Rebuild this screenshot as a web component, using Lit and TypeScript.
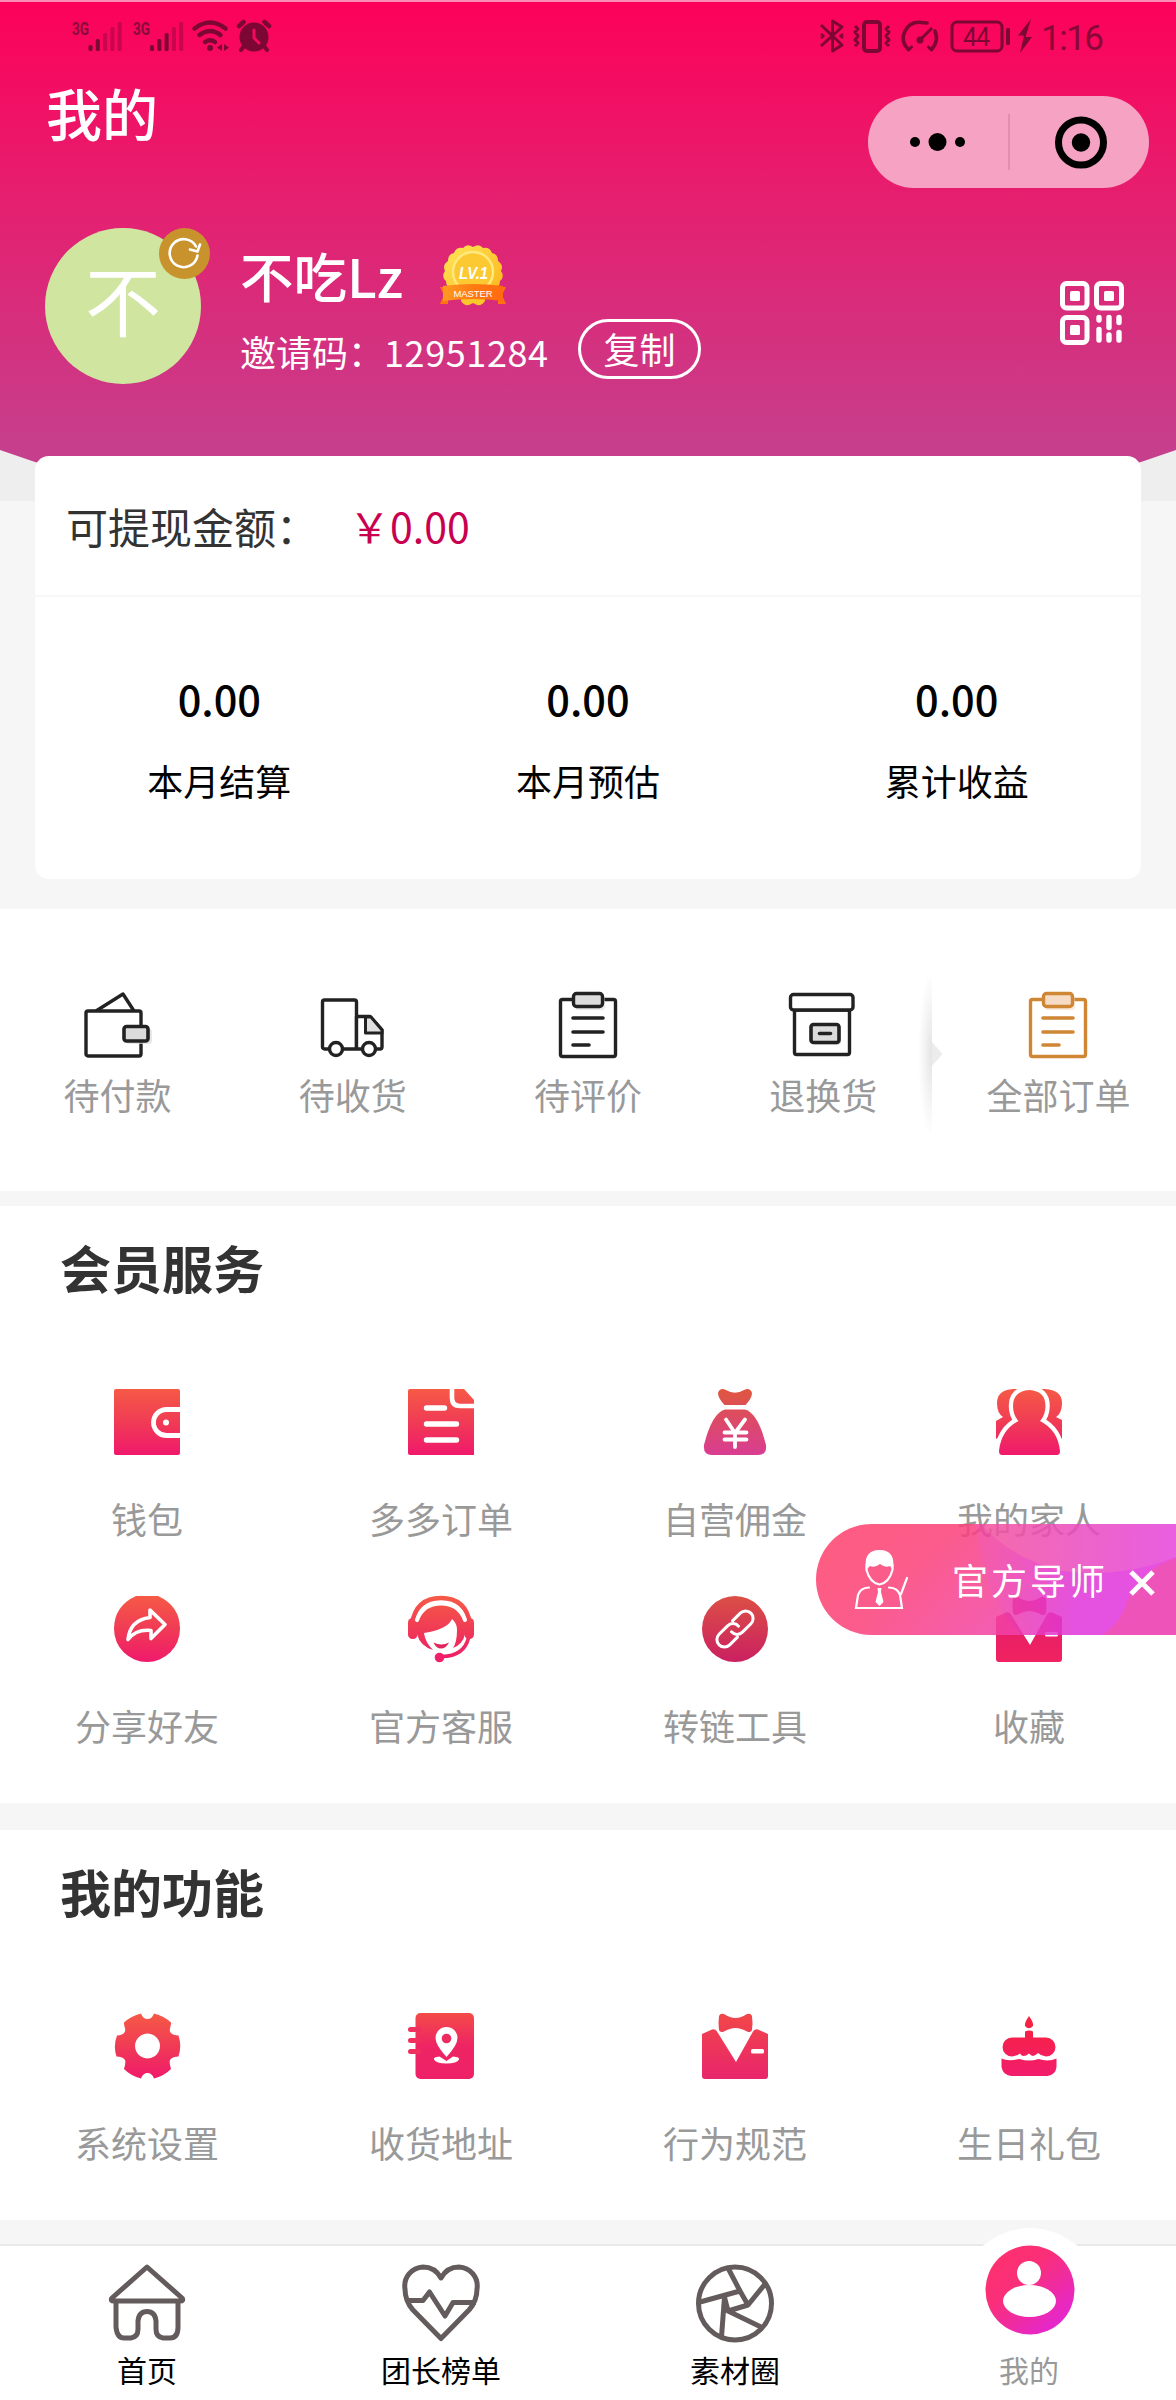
import { LitElement, html, css, svg, TemplateResult, SVGTemplateResult } from "lit";
import { customElement } from "lit/decorators.js";

interface Entry {
  label: string;
  art: SVGTemplateResult;
}

/* Line icons of the order row, drawn on a 72 x 72 grid. */
const clipboard = (line: string, pad: string) => svg`
  <rect x="8.5" y="11.5" width="55" height="57" rx="2" fill="#fff" stroke=${line} stroke-width="3.4"/>
  <rect x="23" y="9" width="30" height="13" rx="3" fill=${pad} opacity=".6"/>
  <rect x="21.5" y="5.5" width="29" height="13" rx="3" fill=${pad} stroke=${line} stroke-width="3.4"/>
  <path d="M21 30h30M21 44h30M21 57h16" stroke=${line} stroke-width="3.6" stroke-linecap="round"/>`;

const orders: Entry[] = [
  {
    label: "待付款",
    art: svg`
      <path d="M14 23L41 6l11 17" fill="#fff" stroke="#222" stroke-width="3.4" stroke-linejoin="round"/>
      <rect x="4" y="23" width="55" height="45" rx="2" fill="#fff" stroke="#222" stroke-width="3.4"/>
      <rect x="44" y="41" width="26" height="15" rx="3" fill="#ddd" opacity=".7"/>
      <rect x="42" y="38.5" width="24" height="14.5" rx="2.5" fill="#dcdcdc" stroke="#222" stroke-width="3.6"/>`,
  },
  {
    label: "待收货",
    art: svg`
      <rect x="5.5" y="12" width="34" height="49" rx="2" fill="#fff" stroke="#222" stroke-width="3.4"/>
      <path d="M39.5 28.5H53L65 42v17q0 2-2 2H39.5z" fill="#fff" stroke="#222" stroke-width="3.4" stroke-linejoin="round"/>
      <path d="M48.5 29H54L65 42v3H48.5z" fill="#e0e0e0" stroke="#222" stroke-width="3" stroke-linejoin="round"/>
      <circle cx="19" cy="61" r="6.5" fill="#fff" stroke="#222" stroke-width="3.4"/>
      <circle cx="52" cy="61" r="6.5" fill="#fff" stroke="#222" stroke-width="3.4"/>`,
  },
  { label: "待评价", art: clipboard("#222", "#dcdcdc") },
  {
    label: "退换货",
    art: svg`
      <rect x="7.5" y="22" width="55" height="44.5" rx="2" fill="#fff" stroke="#222" stroke-width="3.4"/>
      <rect x="3.5" y="6.5" width="62.5" height="15.5" rx="3" fill="#fff" stroke="#222" stroke-width="3.4"/>
      <rect x="26" y="39" width="28" height="18" rx="3" fill="#ddd" opacity=".7"/>
      <rect x="24" y="36.5" width="28" height="18" rx="2.5" fill="#dcdcdc" stroke="#222" stroke-width="3.6"/>
      <path d="M32.5 45.5h11" stroke="#222" stroke-width="3.6" stroke-linecap="round"/>`,
  },
  { label: "全部订单", art: clipboard("#cf8635", "#f6dcc4") },
];

/* Filled service icons, drawn on a 66 x 66 grid. */
const suit = (fill: string) => svg`
  <path fill=${fill} d="M0 21L10 16.5q3-1 5 2L34 49 51 18.5q2-3 5-2L66 21V63q0 3-3 3H3q-3 0-3-3z"/>
  <path fill=${fill} d="M17 3q1-3 5-2 6 4 11.5 4T45 1q4-1 5 2 1 7 0 14-1 3-5 1.5Q39 15 33.5 15T22 18.5Q18 20 17 17q-1-7 0-14z"/>
  <rect x="49" y="36" width="13" height="4.5" rx="1.5" fill="#fff"/>`;

const services: Entry[] = [
  {
    label: "钱包",
    art: svg`
      <rect width="66" height="66" rx="2" fill="url(#warm)"/>
      <path d="M66 20.5H52.5a13 13 0 0 0 0 26H66" fill="none" stroke="#fff" stroke-width="4.8"/>
      <circle cx="52" cy="33.5" r="3" fill="#fff"/>`,
  },
  {
    label: "多多订单",
    art: svg`
      <path d="M2 0H56L66 11V66H2q-2 0-2-2V2q0-2 2-2z" fill="url(#warm)"/>
      <path d="M44 0v9q0 8 8 8H66" fill="none" stroke="#fff" stroke-width="4.6"/>
      <path d="M18.5 19h18M18.5 35h30M18.5 51h30" stroke="#fff" stroke-width="5.4" stroke-linecap="round"/>`,
  },
  {
    label: "自营佣金",
    art: svg`
      <path d="M16 4q2-6 8-3 9 5.5 18 0 6-3 8 3 0 5-6.5 12H22.5Q16 9 16 4z" fill="url(#bag)"/>
      <path d="M23 20.5H43Q56 24 64 56q1 10-8 10H10Q1 66 2 56 10 24 23 20.5z" fill="url(#bag)"/>
      <path d="M24 30.5L33 44 43 30.5M33 44V58M22.5 43.5H44.5M22.5 50.5H44.5" fill="none" stroke="#fff" stroke-width="3.8" stroke-linecap="round"/>`,
  },
  {
    label: "我的家人",
    art: svg`
      <path d="M17 0Q1 1 1 14q0 10 6 14l-7 4V50L24 32V0zM49 0Q66 1 66 14q0 10-6 14l6 3V50L44 32V0z" fill="url(#warm)"/>
      <path d="M33.5 1Q49.500 2 49.500 17q0 9-5.500 15 18 9 20 30 0 4-3 4H6q-3 0-3-4Q5 41 22.500 32 17 26 17 17 17 2 33.500 1z" fill="#fff" stroke="#fff" stroke-width="8.500"/>
      <path d="M33.5 1Q49.500 2 49.500 17q0 9-5.500 15 18 9 20 30 0 4-3 4H6q-3 0-3-4Q5 41 22.500 32 17 26 17 17 17 2 33.500 1z" fill="url(#warm)"/>`,
  },
  {
    label: "分享好友",
    art: svg`
      <path d="M22 0H44Q66 10 66 33A33 33 0 0 1 0 33Q0 10 22 0z" fill="url(#warm)"/>
      <path d="M36 14L51 28.5 37 42.5V34.5Q22 33 14 43.5 16 24 36 21.5z" fill="none" stroke="#fff" stroke-width="3.6" stroke-linejoin="round"/>`,
  },
  {
    label: "官方客服",
    art: svg`
      <path d="M4 28Q8 2 33 2T62 28" fill="none" stroke="url(#warm)" stroke-width="4.5"/>
      <path d="M9 26Q14 8 33 8.5T57 26V38q-2 10-12 14 4-6 4-18 0-7-5-11-4 10-28 14 1 9 9 17Q12 50 9 38z" fill="url(#warm)"/>
      <rect x="0" y="22" width="9.5" height="21" rx="4.5" fill="url(#warm)"/>
      <rect x="56.5" y="22" width="9.5" height="21" rx="4.5" fill="url(#warm)"/>
      <path d="M60.500 42Q56 60 34 60.5" fill="none" stroke="url(#warm)" stroke-width="3.6"/>
      <path d="M9 24Q15 7.5 33 7.5T57 24" fill="none" stroke="#fff" stroke-width="4" stroke-linecap="round"/>
      <path d="M25.5 46.5q8 4 15.5 0-3 6-8 6t-7.5-6z" fill="#e0265c"/>
      <circle cx="31.5" cy="61.5" r="4.8" fill="#f0206a"/>`,
  },
  {
    label: "转链工具",
    art: svg`
      <circle cx="33" cy="33" r="33" fill="url(#deep)"/>
      <g transform="rotate(-45 33 33)" fill="none" stroke="#fff" stroke-width="3" stroke-linecap="round">
        <path d="M29 40.5H18a7.500 7.500 0 0 1 0-15H30a7.500 7.500 0 0 1 7.500 8"/>
        <path d="M37 25.5H48a7.500 7.500 0 0 1 0 15H36a7.500 7.500 0 0 1-7.500-8"/>
      </g>`,
  },
  { label: "收藏", art: suit("url(#suitRed)") },
];

const features: Entry[] = [
  {
    label: "系统设置",
    art: svg`
      <path fill="url(#warm)" fill-rule="evenodd" d="M27 .500Q17 3 10 9.500C9.500 13 13 17 10 20Q8 22 3 22.500Q-1 33 2.500 43.500C6 43.500 9 44 11 47Q12 50 10 56Q17 63 27 65.500Q29 60 33.500 60Q38 60 40 65.500Q50 63 57 56Q55 50 56 47C58 44 61 43.500 64.500 43.500Q68 33 64.500 22.500Q59 22 57 20C54 17 57.500 13 57 9.500Q50 3 40 .500Q38 6 33.500 6Q29 6 27 .500zM33.500 20.500a12.500 12.500 0 1 0 .01 0z"/>`,
  },
  {
    label: "收货地址",
    art: svg`
      <rect x="7.5" width="58.500" height="66" rx="5" fill="url(#book)"/>
      <path d="M2.5 16.5h8M2.5 27.5h8M2.5 38.5h8" stroke="#f0305f" stroke-width="5" stroke-linecap="round"/>
      <path d="M38.5 44Q27.5 32 27.5 25a11 11 0 0 1 22 0Q49.5 32 38.5 44z" fill="#fff"/>
      <circle cx="38.5" cy="25.5" r="4.8" fill="#ee2a63"/>
      <path d="M31.5 43.5Q25 44 26 46.5 28 50.5 38.5 50.5T51 46.5Q52 44 45 43.5L38.5 48z" fill="#fff"/>`,
  },
  { label: "行为规范", art: suit("url(#suitSoft)") },
  {
    label: "生日礼包",
    art: svg`
      <path d="M33 3q5 7 4 10-4 4.5-8 0-1-3 4-10z" fill="url(#cake)"/>
      <path d="M29 18.5q4-2 8 0V24.5H50a9.500 9.500 0 0 1 0 19Q45 43 42 40 37 45.5 33 40.5 27 45.5 24 40.5 21 43 16 43.5a9.500 9.500 0 0 1 0-19H29z" fill="url(#cake)"/>
      <path d="M5.5 45.5q6 3 18 .5 9 3 19 0 10 3 18-.5V54q-1 8-9 9H15q-8-1-9.5-9z" fill="url(#cake)"/>`,
  },
];

/* Tab bar icons on an 80 x 80 grid. */
const tabs: Entry[] = [
  {
    label: "首页",
    art: svg`
      <g fill="none" stroke="#645c5c" stroke-width="5" stroke-linejoin="round" stroke-linecap="round">
        <path d="M40 4L75 35q2 3-2 3H7q-4 0-2-3z"/>
        <path d="M9 40V64q1 11 8 11h7q7-1 7-9V58q1-9.500 9-9.500T49 58v8q0 8 7 9h7q8 0 8-11V40"/>
      </g>`,
  },
  {
    label: "团长榜单",
    art: svg`
      <g fill="none" stroke="#645c5c" stroke-width="5" stroke-linejoin="round">
        <path d="M40 75.5L12 47Q4 38 4 26A19 19 0 0 1 22 4q12 0 18 11Q46 4 58 4A19 19 0 0 1 76 26q0 12-8 21z"/>
        <path d="M5 37.5H22L28.500 29 44 53 52 39.500H75"/>
      </g>`,
  },
  {
    label: "素材圈",
    art: svg`
      <g fill="none" stroke="#645c5c" stroke-width="5" stroke-linejoin="round">
        <circle cx="40" cy="40.500" r="36.500"/>
        <path d="M33 5L45 28 5 39M70 21L53 42 45 28M66 64L33 48 53 42M26.500 74L29.500 34 33 48"/>
      </g>`,
  },
  {
    label: "我的",
    art: svg``,
  },
];

@customElement("app-root")
export class AppRoot extends LitElement {
  static styles = css`
    :host {
      display: block;
      width: 1176px;
      height: 2400px;
      overflow: hidden;
      background: #f6f6f6;
      color: #000;
      font-family: "Noto Sans CJK SC", sans-serif;
      font-size: 36px;
      line-height: 1;
    }
    * { box-sizing: border-box; }
    svg { display: block; flex: none; overflow: visible; }
    .page { position: relative; display: flex; flex-direction: column; height: 2400px; }
    .defs { position: absolute; width: 0; height: 0; }

    .top { display: grid; height: 909px; flex: none; }
    .backdrop, .front { grid-area: 1 / 1; }
    .front { display: flex; flex-direction: column; }
    .status {
      display: flex; justify-content: space-between; align-items: flex-start;
      height: 70px; padding: 17px 72px 0 72px; flex: none;
    }
    .nav {
      display: flex; justify-content: space-between; align-items: flex-start;
      height: 158px; padding: 12px 27px 0 46px; flex: none; color: #fff;
    }
    .nav-title { font-size: 56px; line-height: 60px; font-weight: 500; }
    .capsule { margin-top: 14px; }
    .profile { display: flex; height: 228px; padding: 0 52px 0 45px; color: #fff; flex: none; }
    .avatar {
      position: relative; width: 156px; height: 156px; border-radius: 50%;
      background: #cfe5a0; font-size: 76px; text-align: center; line-height: 141px; flex: none;
    }
    .refresh { position: absolute; right: -9px; top: 0; }
    .who { margin-left: 39px; flex: 1; }
    .name-row { display: flex; align-items: flex-start; height: 91px; padding-top: 17px; gap: 36px; }
    .name { font-size: 53.5px; font-weight: 500; line-height: 60px; }
    .code-row { display: flex; align-items: center; height: 60px; }
    .code { width: 338px; padding-top: 4px; white-space: nowrap; }
    .digits { letter-spacing: 0.6px; }
    .copy {
      width: 123px; height: 60px; border: 3px solid #fff; border-radius: 30px;
      text-align: center; line-height: 53px;
    }
    .qr { margin-top: 53px; }

    .card {
      width: 1106px; height: 423px; margin-left: 35px; background: #fff; border-radius: 14px; flex: none;
    }
    .balance {
      display: flex; align-items: center; height: 141px; padding: 0 0 0 31px;
      border-bottom: 2px solid #f8f8f8; font-size: 42px; color: #333;
    }
    .balance-label { width: 283px; white-space: nowrap; }
    .amount { color: #c8004f; font-size: 41px; }
    .stats { display: grid; grid-template-columns: repeat(3, 1fr); padding-top: 78px; text-align: center; }
    .stat-value { font-size: 41.5px; line-height: 46px; font-weight: 500; }
    .stat-label { line-height: 40px; margin-top: 39px; }

    .orders {
      position: relative; display: grid; grid-template-columns: repeat(5, 1fr);
      height: 282px; padding-top: 79px; background: #fff; flex: none;
    }
    .cell { display: flex; flex-direction: column; align-items: center; color: #999; white-space: nowrap; }
    .orders .cell { gap: 14px; }
    .orders .cell span { line-height: 40px; }
    .split { position: absolute; left: 916px; top: 67px; }

    .section { background: #fff; margin-top: 15px; height: 597px; padding-top: 33px; flex: none; }
    .section.short { margin-top: 27px; height: 390px; }
    .heading { font-size: 51px; line-height: 56px; margin: 0 0 94px 60px; font-weight: 700; color: #333; }
    .grid { display: grid; grid-template-columns: repeat(4, 1fr); grid-auto-rows: 207px; }
    .grid .cell { gap: 43px; }
    .grid .cell span { line-height: 40px; }

    .tutor {
      position: absolute; left: 816px; top: 1524px; width: 360px; height: 111px;
      display: flex; align-items: center; border-radius: 56px 0 0 56px; overflow: hidden; color: #fff;
    }
    .tutor-bg { position: absolute; left: 0; top: 0; }
    .tutor-face { position: relative; margin-left: 39px; }
    .tutor-text { position: relative; margin-left: 44px; letter-spacing: 3px; width: 176px; white-space: nowrap; padding-bottom: 1px; }
    .tutor-x { position: relative; margin-top: 7px; }

    .tabbar {
      display: grid; grid-template-columns: repeat(4, 1fr); height: 156px; margin-top: auto;
      border-top: 2px solid #e9e9e9; background: #fff; font-size: 30px; flex: none;
    }
    .tab { display: flex; flex-direction: column; align-items: center; padding-top: 17px; gap: 9px; }
    .tab span { line-height: 34px; }
    .tab.active { color: #999; position: relative; padding-top: 106px; }
    .bubble { position: absolute; left: 72px; top: -18px; }
  `;

  private cell(e: Entry, size: number): TemplateResult {
    return html`<div class="cell">
      <svg width=${size} height=${size} viewBox="0 0 ${size} ${size}">${e.art}</svg>
      <span>${e.label}</span>
    </div>`;
  }

  private gradient(id: string, stops: [string, string][]): SVGTemplateResult {
    return svg`<linearGradient id=${id} gradientUnits="userSpaceOnUse" x1="0" y1="0" x2="0" y2="66">
      ${stops.map(([o, c]) => svg`<stop offset=${o} stop-color=${c}></stop>`)}
    </linearGradient>`;
  }

  private statusBar(): TemplateResult {
    const ink = "#7c0634";
    const dim = "#c90550";
    const bars = (x: number, lit: number) =>
      [45, 39, 33, 27, 22].map(
        (y, i) => svg`<rect x=${x + i * 7.3} y=${y - 17} width="4" height=${51 - y} rx="1.5" fill=${i < lit ? ink : dim}></rect>`,
      );
    return html`<div class="status">
      <svg width="202" height="36" viewBox="0 0 202 36" font-family="Roboto" font-size="19" font-weight="700">
        <text x="0" y="17.5" fill="#8a0a3c" textLength="17" lengthAdjust="spacingAndGlyphs">3G</text>
        ${bars(16.5, 2)}
        <text x="61" y="17.5" fill="#8a0a3c" textLength="17" lengthAdjust="spacingAndGlyphs">3G</text>
        ${bars(78, 3)}
        <g fill="none" stroke=${ink} stroke-width="4.5" stroke-linecap="round">
          <path d="M122.5 11.5q15.500-12 31 0"/>
          <path d="M127.5 18q10.500-8 21 0"/>
          <path d="M133 25q5-3.500 10 0"/>
        </g>
        <circle cx="138" cy="31" r="3" fill=${ink}/>
        <path d="M150 27v7l-5-3.500zM152 27v7l5-3.500z" fill=${ink}/>
        <circle cx="182" cy="20" r="14.500" fill=${ink}/>
        <path d="M172 29l-3 4M192 29l3 4" stroke=${ink} stroke-width="4" stroke-linecap="round"/>
        <path d="M167 9l4.500-4M197 9l-4.500-4" stroke=${ink} stroke-width="4.500" stroke-linecap="round"/>
        <path d="M182 13v8l5 5" fill="none" stroke="#f40a5e" stroke-width="3" stroke-linecap="round"/>
      </svg>
      <svg width="284" height="38" viewBox="820 17 284 38">
        <g fill="none" stroke=${ink} stroke-width="3" stroke-linejoin="round">
          <path d="M821 25L842 45 832.500 51V21L842 27 821 46"/>
          <path d="M821 34l2.500 2-2.500 2M843 34l-2.500 2 2.500 2" stroke-width="2.600"/>
          <rect x="864" y="22" width="16" height="29" rx="3" stroke-width="4"/>
          <path d="M855 26l3 3-3 3 3 4-3 4 3 3-3 3M889 26l-3 3 3 3-3 4 3 4-3 3 3 3" stroke-width="3"/>
          <path d="M908 49Q900 41 905 31T922 22.500L927 23M935 31Q939 41 932 49" stroke-width="3.600" stroke-linecap="round"/>
          <path d="M908.500 50l3-3M931.500 50l-3-3" stroke-width="3" stroke-linecap="round"/>
          <path d="M932 28L920 40" stroke-width="3"/>
          <rect x="952" y="22" width="50" height="29" rx="5" stroke-width="3"/>
        </g>
        <circle cx="920" cy="40" r="3.500" fill=${ink}/>
        <text x="963" y="45.500" font-family="Roboto" font-size="25" font-weight="400" fill=${ink} textLength="27">44</text>
        <rect x="1006" y="28" width="4" height="17" rx="1.500" fill=${ink}/>
        <path d="M1031 19L1018 35.500h6L1020 53 1032 37h-6.500z" fill=${ink}/>
        <text x="1041" y="50" font-family="Roboto" font-size="35" fill="#8a0838" textLength="63">1:16</text>
      </svg>
    </div>`;
  }

  render() {
    return html`<div class="page">
      <svg class="defs" aria-hidden="true">
        <defs>
          ${this.gradient("warm", [["0", "#f65a46"], [".5", "#f03b55"], ["1", "#f0196c"]])}
          ${this.gradient("bag", [["0", "#df563f"], ["1", "#d93d92"]])}
          ${this.gradient("deep", [["0", "#dc4f45"], ["1", "#ca2061"]])}
          ${this.gradient("book", [["0", "#f44b48"], [".5", "#ee2464"], ["1", "#ee2168"]])}
          ${this.gradient("suitRed", [["0", "#e01c70"], ["1", "#f02260"]])}
          ${this.gradient("suitSoft", [["0", "#f24748"], ["1", "#e8256c"]])}
          ${this.gradient("cake", [["0", "#f92338"], ["1", "#f11c70"]])}
        </defs>
      </svg>

      <div class="top">
        <svg class="backdrop" width="1176" height="501" viewBox="0 0 1176 501">
          <defs>
            <linearGradient id="hero" gradientUnits="userSpaceOnUse" x1="0" y1="0" x2="0" y2="501">
              <stop offset="0" stop-color="#fd0159"/>
              <stop offset=".4" stop-color="#e51f6f"/>
              <stop offset=".9" stop-color="#c63f8c"/>
            </linearGradient>
          </defs>
          <rect width="1176" height="501" fill="#eeeeee"/>
          <path d="M0 0H1176V450L1141 462Q588 560 35 462L0 450z" fill="url(#hero)"/>
          <rect width="1176" height="2" fill="#f88db6"/>
        </svg>
        <div class="front">
          ${this.statusBar()}
          <div class="nav">
            <div class="nav-title">我的</div>
            <svg class="capsule" width="281" height="92" viewBox="0 0 281 92">
              <rect width="281" height="92" rx="46" fill="#f5a2c3"/>
              <circle cx="47" cy="46" r="5"/><circle cx="69.500" cy="46" r="9"/><circle cx="92" cy="46" r="5"/>
              <path d="M141 18V74" stroke="#dc86aa" stroke-width="1.500"/>
              <circle cx="213" cy="46.500" r="22.500" fill="none" stroke="#000" stroke-width="7"/>
              <circle cx="213" cy="46.500" r="9.200"/>
            </svg>
          </div>
          <div class="profile">
            <div class="avatar">不
              <svg class="refresh" width="51" height="51" viewBox="0 0 51 51">
                <circle cx="25.500" cy="25.500" r="25.500" fill="#c8922c"/>
                <path d="M38.500 27.500A14 14 0 1 1 37 18.500M31 21.500l7.500 2 2.500-7" fill="none" stroke="#fff" stroke-width="2.600" stroke-linecap="round" stroke-linejoin="round"/>
              </svg>
            </div>
            <div class="who">
              <div class="name-row">
                <div class="name">不吃Lz</div>
                <svg width="68" height="61" viewBox="0 0 68 61">
                  <defs><linearGradient id="gold" x1="0" y1="0" x2="1" y2="1">
                    <stop offset="0" stop-color="#ffe658"/><stop offset="1" stop-color="#fbb216"/></linearGradient>
                    <linearGradient id="ribbon"><stop offset="0" stop-color="#ff9a20"/><stop offset=".5" stop-color="#ff7a12"/><stop offset="1" stop-color="#ff6a10"/></linearGradient></defs>
                  <path d="M1 42h8v17H1l4-9zM67 42h-8v17h8l-4-9z" fill="#ff7412"/>
                  <path d="M34 2q6-4 10 1 7-1 9 5 6 1 6 8 6 4 3 10 4 6-1 10 0 7-7 9-2 6-8 6-5 6-12 6t-12-6q-6 0-8-6-7-2-7-9-5-4-1-10-3-6 3-10 0-7 6-8 2-6 9-5 4-5 10-1z" fill="url(#gold)"/>
                  <circle cx="34" cy="27" r="20" fill="#fdc932" stroke="#ffe97c" stroke-width="2.500"/>
                  <path d="M22 50h24v6q-3 5-8 4l-4-2-4 2q-5 1-8-4z" fill="#fbc52c"/>
                  <path d="M4 41q30-4 60 0v15q-30-4-60 0z" fill="url(#ribbon)"/>
                  <text x="20" y="34" font-family="Liberation Sans" font-size="16" font-weight="700" font-style="italic" fill="#fff" textLength="29" lengthAdjust="spacingAndGlyphs">LV.1</text>
                  <text x="14.500" y="52" font-family="Liberation Sans" font-size="9.500" fill="#fff" textLength="39">MASTER</text>
                </svg>
              </div>
              <div class="code-row">
                <div class="code">邀请码：<span class="digits">12951284</span></div>
                <div class="copy">复制</div>
              </div>
            </div>
            <svg class="qr" width="64" height="64" viewBox="0 0 64 64">
              <g fill="none" stroke="#fff" stroke-width="5">
                <rect x="2.500" y="2.500" width="24.500" height="24.500" rx="4"/>
                <rect x="36.500" y="2.500" width="25" height="24.500" rx="4"/>
                <rect x="2.500" y="36.500" width="24.500" height="25" rx="4"/>
              </g>
              <g fill="#fff">
                <rect x="10" y="10" width="10" height="10" rx="1.500"/>
                <rect x="44" y="10" width="10" height="10" rx="1.500"/>
                <rect x="10" y="44" width="10" height="10" rx="1.500"/>
              </g>
              <path d="M39 36.500v2.500M39 48.500V59M49 36.500V46.500M49 54v5M59 36.500v5M59 51.500V59" stroke="#fff" stroke-width="5.400" stroke-linecap="round"/>
            </svg>
          </div>
          <div class="card">
            <div class="balance">
              <div class="balance-label">可提现金额：</div>
              <div class="amount">￥0.00</div>
            </div>
            <div class="stats">
              ${["本月结算", "本月预估", "累计收益"].map(
                (l) => html`<div><div class="stat-value">0.00</div><div class="stat-label">${l}</div></div>`,
              )}
            </div>
          </div>
        </div>
      </div>

      <div class="orders">
        ${orders.map((e) => this.cell(e, 72))}
        <svg class="split" width="28" height="156" viewBox="0 0 28 156">
          <defs>
            <radialGradient id="shade" cx="1" cy=".5" r=".5">
              <stop offset="0" stop-color="#000" stop-opacity=".11"/>
              <stop offset=".6" stop-color="#000" stop-opacity=".04"/>
              <stop offset="1" stop-color="#000" stop-opacity="0"/>
            </radialGradient>
          </defs>
          <rect x="-12" y="-6" width="28" height="168" fill="url(#shade)"/>
          <path d="M16 66L26.500 78 16 90z" fill="#ececec"/>
        </svg>
      </div>

      <div class="section">
        <h2 class="heading">会员服务</h2>
        <div class="grid">${services.map((e) => this.cell(e, 66))}</div>
      </div>

      <div class="section short">
        <h2 class="heading">我的功能</h2>
        <div class="grid">${features.map((e) => this.cell(e, 66))}</div>
      </div>

      <div class="tabbar">
        ${tabs.map((t, i) =>
          i < 3
            ? html`<div class="tab"><svg width="80" height="80" viewBox="0 0 80 80">${t.art}</svg><span>${t.label}</span></div>`
            : html`<div class="tab active">
                <svg class="bubble" width="152" height="120" viewBox="0 0 152 120">
                  <defs><linearGradient id="me" x1=".1" y1=".2" x2=".8" y2="1">
                    <stop offset="0" stop-color="#fd3070"/><stop offset=".3" stop-color="#fa2f78"/><stop offset="1" stop-color="#e226d8"/></linearGradient></defs>
                  <path d="M27 19Q50 0 76 0T125 19V60H27z" fill="#fff"/>
                  <circle cx="76" cy="62" r="44.500" fill="url(#me)"/>
                  <circle cx="75" cy="45" r="12" fill="#fff"/>
                  <ellipse cx="75.500" cy="73" rx="26.500" ry="16" fill="#fff"/>
                </svg>
                <span>${t.label}</span>
              </div>`,
        )}
      </div>

      <div class="tutor">
        <svg class="tutor-bg" width="360" height="111" viewBox="0 0 360 111" opacity=".86">
          <defs><linearGradient id="tb" x1="0" y1="0" x2="1" y2=".3">
            <stop offset="0" stop-color="#ff426a"/><stop offset=".35" stop-color="#fb4279"/><stop offset=".7" stop-color="#f343a2"/><stop offset="1" stop-color="#ea3fc8"/></linearGradient>
            <linearGradient id="tb2" x1="0" y1="0" x2="1" y2="0">
            <stop offset="0" stop-color="#f4439a"/><stop offset=".5" stop-color="#dc33e2"/><stop offset="1" stop-color="#e233e2"/></linearGradient>
            <linearGradient id="tb3" x1="0" y1="0" x2="1" y2="0">
            <stop offset="0" stop-color="#f4569c"/><stop offset="1" stop-color="#e648dc"/></linearGradient></defs>
          <rect width="360" height="111" fill="url(#tb)"/>
          <path d="M160 0H360V36L290 111H205Q165 70 160 0z" fill="url(#tb2)" opacity=".8"/>
          <path d="M165 0Q190 30 240 46 300 56 360 33V0z" fill="url(#tb3)" opacity=".85"/>
          <path d="M360 34Q324 46 312 76 304 100 286 111H360z" fill="#ec38ae"/>
        </svg>
        <svg class="tutor-face" width="53" height="60" viewBox="0 0 53 60">
          <path d="M11 20Q8 0 24.500 0T38 20l-3-4q-5 2-10-2-5 4-10 2z" fill="#fff"/>
          <path d="M11.500 15V20Q15 33 24.500 34.500 34 33 37.500 20V15M14 37.500Q5 38 3 45L1 58H47L45 45Q43 38 34 37.500M46 44L52 28" fill="none" stroke="#fff" stroke-width="2.200" stroke-linecap="round"/>
          <path d="M22.500 38h4l-.5 4 2.500 10-4 4-4-4L23 42z" fill="#fff"/>
        </svg>
        <div class="tutor-text">官方导师</div>
        <svg class="tutor-x" width="28" height="28" viewBox="0 0 28 28"><path d="M3 3L25 25M25 3L3 25" stroke="#fff" stroke-width="5"/></svg>
      </div>
    </div>`;
  }
}
